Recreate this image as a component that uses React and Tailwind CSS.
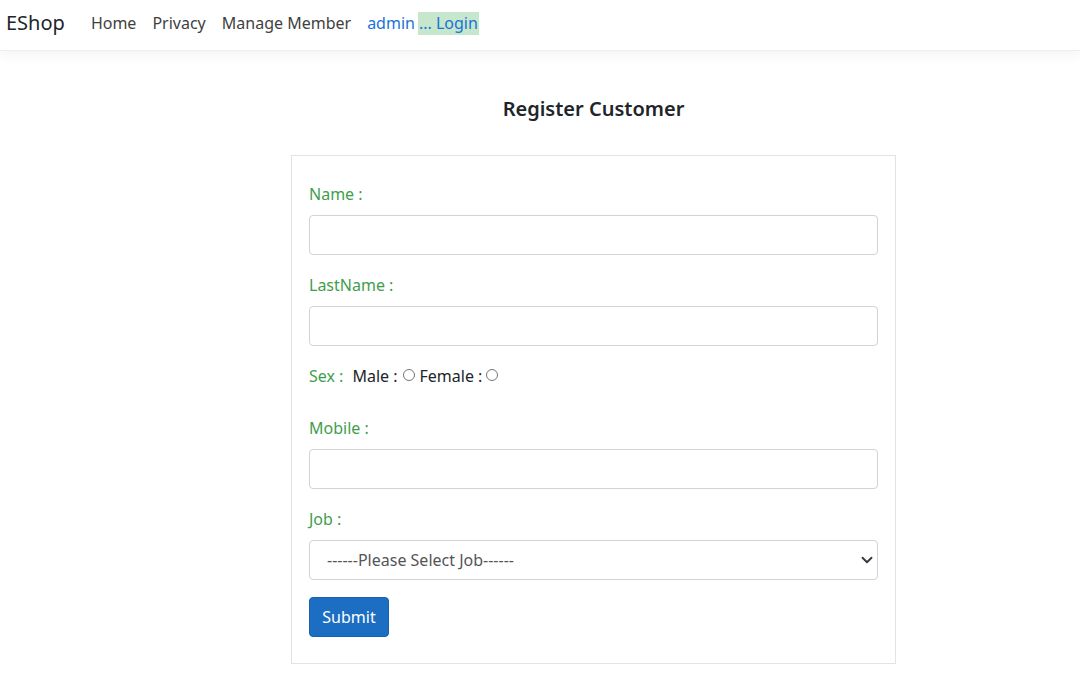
import React from "react";

const Field = ({ label }) => (
  <div className="mb-[18px]">
    <label className="block text-[16px] text-[#3f9e4d] leading-6 mb-[9px]">{label}</label>
    <input
      type="text"
      className="block w-full h-[40px] rounded-[4px] border border-[#ced4da] bg-white px-3 outline-none"
    />
  </div>
);

const App = () => {
  return (
    <div className="min-h-screen bg-white text-[#212529]" style={{ fontFamily: '"Noto Sans", "Open Sans", sans-serif' }}>
      <nav className="h-[51px] bg-white border-b border-[#eeeeee] shadow-[0_4px_12px_rgba(0,0,0,0.05)] flex items-center px-[6px] pb-[4px]">
        <span className="text-[20px] text-[#212529] mr-[26px] leading-none">EShop</span>
        <div className="flex items-center gap-[16px] text-[16px] text-[#3f3f3f]">
          <a href="#">Home</a>
          <a href="#">Privacy</a>
          <a href="#">Manage Member</a>
          <span className="flex items-center">
            <a href="#" className="text-[#1a73d9]">admin</a>
            <a href="#" className="text-[#1a73d9] bg-[#c6e7cc] ml-[3px] px-[1px] leading-[23px]">... Login</a>
          </span>
        </div>
      </nav>

      <div className="ml-[291px] w-[605px] pt-[46px]">
        <h4 className="text-center text-[20px] font-semibold leading-6 mb-[34px]">Register Customer</h4>
        <div className="border border-[#e3e3e3] px-[17px] pt-[26px] pb-[26px]">
          <Field label="Name :" />
          <Field label="LastName :" />
          <div className="flex items-center text-[16px] leading-6 mb-[28px] mt-[7px]">
            <span className="text-[#3f9e4d] mr-[9px]">Sex :</span>
            <span>Male :</span>
            <input type="radio" name="sex" className="w-[12px] h-[12px] ml-[5px] mr-[5px] -mt-[3px]" />
            <span>Female :</span>
            <input type="radio" name="sex" className="w-[12px] h-[12px] ml-[4px] mr-[3px] -mt-[3px]" />
          </div>
          <Field label="Mobile :" />
          <div className="mb-[17px]">
            <label className="block text-[16px] text-[#3f9e4d] leading-6 mb-[9px]">Job :</label>
            <div className="relative">
              <select className="block w-full h-[40px] rounded-[4px] border border-[#ced4da] bg-white pl-[17px] pr-8 text-[16px] text-[#555] appearance-none outline-none">
                <option>------Please Select Job------</option>
              </select>
              <svg className="absolute right-[5px] top-[14px] w-[12px] h-[12px] pointer-events-none" viewBox="0 0 16 16">
                <path d="M2 5l6 6 6-6" fill="none" stroke="#343a40" strokeWidth="2.5" strokeLinecap="round" strokeLinejoin="round" />
              </svg>
            </div>
          </div>
          <button className="h-[40px] w-[80px] rounded-[4px] bg-[#1b6ec2] border border-[#1861ac] text-white text-[16px]">
            Submit
          </button>
        </div>
      </div>
    </div>
  );
};

export default App;
